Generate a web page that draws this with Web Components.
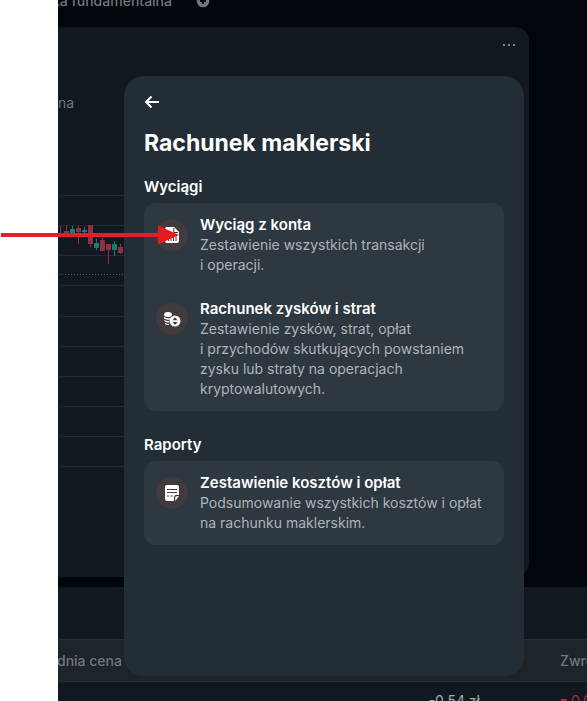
<!DOCTYPE html>
<html lang="pl">
<head>
<meta charset="utf-8">
<title>Rachunek maklerski</title>
<style>
  body { margin: 0; height: 100vh; overflow: hidden; background: #fff; font-family: Inter, "Noto Sans", sans-serif; font-size: 14px; line-height: 20px; color: #fff; }
</style>
</head>
<body>
<broker-page></broker-page>
<script>
const define = (name, html, setup) => customElements.define(name, class extends HTMLElement {
  constructor() {
    super();
    const t = document.createElement('template');
    t.innerHTML = html;
    this.attachShadow({ mode: 'open' }).append(t.content.cloneNode(true));
    if (setup) setup(this, this.shadowRoot);
  }
});

define('tab-strip', `
<style>
  :host { display: flex; gap: 24px; height: 27px; overflow: hidden; color: #72777b; }
  a { color: inherit; text-decoration: none; font-weight: 500; white-space: nowrap; flex: none; width: 114px; display: flex; justify-content: flex-end; margin-top: -9px; }
  button { all: unset; flex: none; width: 14px; height: 14px; margin-top: -6px; }
  svg { display: block; }
</style>
<a href="#fundamental">ka fundamentalna</a>
<button aria-label="Dodaj"><svg width="14" height="14" viewBox="0 0 14 14"><circle cx="7" cy="7" r="6.3" fill="#72777b"/><path d="M7 4v6M4 7h6" stroke="#02070e" stroke-width="2"/></svg></button>
`);

define('price-chart', `
<style>
  :host { display: flex; flex-direction: column; background: #11181f; border-radius: 0 14px 14px 0; margin-right: 58px; overflow: hidden; color: #72777b; }
  header { display: flex; justify-content: flex-end; padding: 10px 12px; }
  button { all: unset; display: block; width: 16px; height: 16px; }
  .label { padding: 30px 0 0; font-weight: 400; }
  svg { display: block; }
  .plot { margin-top: 77px; flex: none; }
</style>
<header><button aria-label="Więcej"><svg width="16" height="16" fill="#82878b"><rect x="2" y="7" width="2" height="2"/><rect x="7" y="7" width="2" height="2"/><rect x="12" y="7" width="2" height="2"/></svg></button></header>
<div class="label">na</div>
<svg class="plot" width="100%" height="280" aria-hidden="true"></svg>
`, (el, root) => {
  const up = '#12806a', down = '#8e3142';
  const candles = [
    [0, 233, 235, 226, 235, down], [6, 231, 234, 225, 234, down], [12, 229, 233, 226, 234, up],
    [18, 228, 232, 226, 244, down], [24, 230, 232, 227, 234, up], [30, 225, 244, 225, 247, down],
    [36, 243, 248, 239, 250, up], [42, 240, 251, 238, 251, down], [48, 244, 250, 244, 264, down],
    [54, 244, 250, 241, 256, up], [60, 247, 253, 244, 254, down]];
  let s = '';
  for (const y of [195, 225, 255, 285, 316, 346, 376, 406, 436, 466])
    s += `<rect x="0" y="${y - 190}" width="80%" height="1" fill="#242a30"/>`;
  s += '<path d="M1 84.5H371" stroke="#157565" stroke-dasharray="1 2"/>';
  for (const [x, a, b, hi, lo, c] of candles)
    s += `<rect x="${x}" y="${a - 190}" width="5" height="${b - a}" fill="${c}"/><rect x="${x + 2}" y="${hi - 190}" width="1" height="${lo - hi}" fill="${c}"/>`;
  root.querySelector('.plot').innerHTML = s;
});

define('positions-table', `
<style>
  :host { display: block; background: #11181f; margin-top: 10px; padding-top: 52px; height: 62px; }
  table { width: 100%; border-collapse: collapse; table-layout: fixed; }
  th { background: #1d242a; height: 41px; padding: 0; border: solid #292f34; border-width: 1px 0; color: #72777b; font-weight: 500; text-align: left; white-space: nowrap; }
  td { padding: 9px 0; white-space: nowrap; color: #a7abae; }
  td:nth-child(2) { text-align: right; padding-right: 80px; }
  td.loss { color: #a52b3d; }
  .end { width: 27px; }
  .first { width: 66px; text-indent: -1px; }
</style>
<table>
  <thead><tr><th class="first">dnia cena</th><th></th><th class="end">Zwrot</th></tr></thead>
  <tbody><tr><td></td><td>-0,54 zł</td><td class="loss">▾ 0,0</td></tr></tbody>
</table>
`);

define('report-item', `
<style>
  :host { display: flex; gap: 12px; }
  .icon { flex: none; width: 32px; height: 32px; margin-top: 4px; border-radius: 50%; background: #423a3d; display: grid; place-items: center; }
  a { color: #fff; text-decoration: none; font-size: 15px; font-weight: 600; display: block; }
  p { margin: 0; color: #b0b4b8; font-weight: 400; }
</style>
<span class="icon"><slot name="icon"></slot></span>
<div><a href="#report"><slot name="title"></slot></a><p><slot></slot></p></div>
`);

define('report-section', `
<style>
  :host { display: block; }
  h2 { margin: 0 0 6px; font-size: 15px; line-height: 20px; font-weight: 600; }
  div { display: flex; flex-direction: column; gap: 24px; padding: 12px; border-radius: 12px; background: #2e3841; }
</style>
<h2><slot name="heading"></slot></h2>
<div><slot></slot></div>
`);

define('account-dialog', `
<style>
  :host { display: flex; flex-direction: column; box-sizing: border-box; padding: 14px 20px; border-radius: 20px; background: #232d35; }
  button { all: unset; width: 16px; height: 24px; display: grid; place-items: center; margin-bottom: 13px; }
  h1 { margin: 0 0 18px; font-size: 23px; line-height: 32px; font-weight: 700; }
  .sections { display: flex; flex-direction: column; gap: 24px; }
</style>
<button aria-label="Wstecz"><svg width="16" height="16" viewBox="0 0 16 16" fill="none" stroke="#fff" stroke-width="2"><path d="M15 8H2M7.5 2.5L2 8l5.500 5.500"/></svg></button>
<h1><slot name="title"></slot></h1>
<div class="sections"><slot></slot></div>
`);

define('pointer-arrow', `
<style>:host { display: block; } svg { display: block; }</style>
<svg width="180" height="20" viewBox="0 0 180 20" fill="#e51c1f" aria-hidden="true"><rect x="1" y="8" width="160" height="4" fill="#d92328"/><path d="M158 0.500L179 10 158 19.500z"/></svg>
`);

define('broker-page', `
<style>
  :host { display: block; height: 100%; position: relative; overflow: hidden; }
  main { display: flex; flex-direction: column; box-sizing: border-box; height: 100%; margin-left: 58px; background: #01060d; overflow: hidden; }
  price-chart { flex: 1; min-height: 0; }
  positions-table { flex: none; }
  account-dialog { position: absolute; inset: 76px 63px 25px 124px; }
  pointer-arrow { position: absolute; left: 0; top: 225px; }
</style>
<main><tab-strip></tab-strip><price-chart></price-chart><positions-table></positions-table></main>
<account-dialog role="dialog">
  <span slot="title">Rachunek maklerski</span>
  <report-section>
    <span slot="heading">Wyciągi</span>
    <report-item>
      <svg slot="icon" width="16" height="16" viewBox="0 0 16 16"><path d="M3 0h7l5 5v9a2 2 0 0 1-2 2H3a2 2 0 0 1-2-2V2a2 2 0 0 1 2-2z" fill="#fff"/><path d="M9.800 1v4.500H14M4.500 10v4M7 8v6M9.500 10v4M12 9v5" fill="none" stroke="#423a3d"/></svg>
      <span slot="title">Wyciąg z konta</span>Zestawienie wszystkich transakcji i&nbsp;operacji.
    </report-item>
    <report-item>
      <svg slot="icon" width="18" height="16" viewBox="0 0 18 16"><g fill="#fff"><ellipse cx="5" cy="3.500" rx="4" ry="2.500"/><path d="M1 6q3.500 2 7 1v1.500q-4 1-7-1zM1.500 9q2.500 1.500 4.500 1v1.500q-2.500.3-4.500-1.300zM2 12q2 1.200 4 1v1q-2.500.3-4-1z"/><circle cx="12" cy="10" r="5.500"/></g><path d="M9.500 9.300L12 6.300l2.500 3zM9.500 11h5L12 14z" fill="#423a3d"/></svg>
      <span slot="title">Rachunek zysków i strat</span>Zestawienie zysków, strat, opłat i&nbsp;przychodów skutkujących powstaniem zysku lub straty na operacjach kryptowalutowych.
    </report-item>
  </report-section>
  <report-section>
    <span slot="heading">Raporty</span>
    <report-item>
      <svg slot="icon" width="16" height="16" viewBox="0 0 16 16"><path d="M3 0h10a2 2 0 0 1 2 2v8h-3a2 2 0 0 0-2 2v4H3a2 2 0 0 1-2-2V2a2 2 0 0 1 2-2zM11.200 16v-3.500a1.200 1.200 0 0 1 1.200-1.200H15z" fill="#fff"/><path d="M3 4.500h10M3 7.500h10M3 11h2M6.500 11h2" stroke="#423a3d" stroke-width="1.200"/></svg>
      <span slot="title">Zestawienie kosztów i opłat</span>Podsumowanie wszystkich kosztów i&nbsp;opłat na rachunku maklerskim.
    </report-item>
  </report-section>
</account-dialog>
<pointer-arrow></pointer-arrow>
`);
</script>
</body>
</html>
